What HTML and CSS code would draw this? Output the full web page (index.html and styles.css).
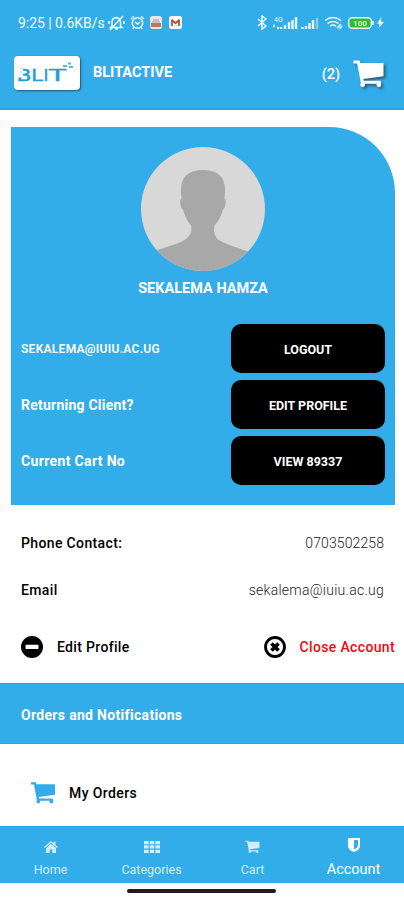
FILE: index.html
```html
<!DOCTYPE html>
<html lang="en">
<head>
<meta charset="utf-8">
<meta name="viewport" content="width=device-width, initial-scale=1">
<title>BLITACTIVE</title>
<link rel="stylesheet" href="styles.css">
</head>
<body>
<svg class="defs" aria-hidden="true">
  <symbol id="cart" viewBox="0 0 24 24">
    <path d="M0 1.200h4.700l.9 2H24V13.800L7.800 16l.4 1.400h13.600v2.400H6L2.900 3.500H0z"/>
    <circle cx="7.300" cy="20.500" r="1.900"/><circle cx="20.300" cy="20.500" r="1.900"/>
  </symbol>
</svg>
<header class="top">
  <div class="status">
    <span class="clock">9:25 | 0.6KB/s</span>
    <svg class="mute" viewBox="0 0 17 16"><path d="M4 11V7q0-4 4-4.500 4 .5 4.500 4.500v4l1.500 1.500H2.500zM7 14h3M2 15 15 1M1 6v3M16 6v3"/></svg>
    <svg class="alarm" viewBox="0 0 15 15"><circle cx="7.500" cy="8" r="5.200"/><path d="M1 4 4 1.200M14 4l-3-2.800M5 7l2.500 2L10 7M4 12l-1 2M11 12l1 2"/></svg>
    <svg class="app" viewBox="0 0 12 13"><rect width="12" height="13" rx="2.500" fill="#e9e5e8"/><path d="M1 7h10v4H1z" fill="#b57965"/><path d="M3 4h6M2 6h8" stroke="#b5b1bb"/></svg>
    <svg class="gmail" viewBox="0 0 13 13"><rect width="13" height="13" rx="2.500" fill="#fff"/><path d="M3 10V4" stroke="#4285f4" stroke-width="2"/><path d="M10 10V4" stroke="#34a853" stroke-width="2"/><path d="m2.500 3.800 4 3.400 4-3.400" fill="none" stroke="#e63b30" stroke-width="2"/></svg>
    <svg class="bluetooth" viewBox="0 0 10 15"><path d="m1 4 8 7-4 3V1l4 3-8 7"/></svg>
    <svg class="signal" viewBox="0 0 26 14"><text x="2" y="5.500">4G</text><path d="M1 10h2M5 12h2M9 13v-2M13 13V9M17 13V6M20.500 13V4M24 13V1"/></svg>
    <svg class="signal two" viewBox="0 0 18 14"><path d="M1.500 13v-2M5 13v-3M8.500 13V7M12 13V4"/><path d="M16 13V2" opacity=".45"/></svg>
    <svg class="wifi" viewBox="0 0 19 14"><path d="M1 4.500q8-6 16 0M3.500 7.500q5.500-4 11 0M6 10.200q3-2.200 6 0M9 12.500v.1M13 12l4-4M15 13l3-3"/></svg>
    <svg class="battery" viewBox="0 0 26 12"><rect x=".7" y=".7" width="22.600" height="10.600" rx="3.500" fill="#35b83b" stroke="#eafbea" stroke-width="1.400"/><path d="M24.800 4v4" stroke="#fff" stroke-width="1.500"/><text x="12" y="9">100</text></svg>
    <svg class="bolt" viewBox="0 0 8 12"><path d="M5 0 0 7h3l-1 5 6-7H4.500z"/></svg>
  </div>
  <div class="brand-row">
    <svg class="logo" viewBox="0 0 66 34" role="img" aria-label="BLIT">
      <defs><clipPath id="b-clip"><path d="M6 8h14v20H3v-6.500h6V17H7v-2h2v-2H6z"/></clipPath></defs>
      <g clip-path="url(#b-clip)"><text x="2.500" y="25" textLength="15" lengthAdjust="spacingAndGlyphs">B</text></g>
      <text x="17" y="25" textLength="12" lengthAdjust="spacingAndGlyphs">L</text>
      <text x="29.500" y="25">I</text>
      <text x="35" y="25" textLength="17" lengthAdjust="spacingAndGlyphs">T</text>
      <path class="pixels" d="M49 9h4v2h-4zM54 6.500h3v2h-3zM55 10h4v2h-4z"/>
    </svg>
    <span class="brand">BLITACTIVE</span>
    <span class="count">(2)</span>
    <svg class="cart-top"><use href="#cart"/></svg>
  </div>
</header>
<main>
  <section class="profile">
    <svg class="avatar" viewBox="0 0 124 124"><defs><clipPath id="disc"><circle cx="62" cy="62" r="62"/></clipPath></defs><g clip-path="url(#disc)"><path d="M0 0h124v124H0z" fill="#d8d8d8"/><path d="M62 23c15 0 23 7 22 23l-.5 6c2 0 1.500 9-1.500 10.500-2 7-4 11-8.500 16-1.500 8 1 13 7 16 8 4 19 7 29 11v20H10v-20c12-5 22-7 31-11 6-3 11-8 9-16-4-5-6-9-8-16-3-2-4-10-1.500-10.500L40 46c-1-16 7-23 22-23z" fill="#a8a8a8"/></g></svg>
    <h1>SEKALEMA HAMZA</h1>
    <div class="line"><span class="mail-caps">SEKALEMA@IUIU.AC.UG</span><button>LOGOUT</button></div>
    <div class="line"><span class="returning">Returning Client?</span><button>EDIT PROFILE</button></div>
    <div class="line"><span class="current">Current Cart No</span><button>VIEW 89337</button></div>
  </section>
  <dl class="contact">
    <div><dt>Phone Contact:</dt><dd class="phone">0703502258</dd></div>
    <div><dt>Email</dt><dd class="email">sekalema@iuiu.ac.ug</dd></div>
  </dl>
  <div class="actions">
    <svg viewBox="0 0 22 22"><circle cx="11" cy="11" r="11"/><rect x="4.500" y="8.800" width="13" height="4.200" rx=".7" fill="#fff"/></svg>
    <span class="edit">Edit Profile</span>
    <svg class="close-icon" viewBox="0 0 22 22"><circle cx="11" cy="11" r="9.500" fill="none" stroke="#000" stroke-width="2.800"/><path d="m7.500 7.500 7 7m0-7-7 7" stroke="#000" stroke-width="3.800"/></svg>
    <span class="close">Close Account</span>
  </div>
  <h2><span>Orders and Notifications</span></h2>
  <div class="orders"><svg><use href="#cart"/></svg><span>My Orders</span></div>
</main>
<nav>
  <a><svg class="home" viewBox="0 0 14 12"><path d="m0 6 7-6 2.500 2.200V.8h2v3.100L14 6l-.8 1L7 1.800.8 7z"/><path d="m2 7 5-4.200L12 7v5H8.300V8.500H5.700V12H2z"/></svg><span>Home</span></a>
  <a><svg class="grid" viewBox="0 0 16 12"><path d="M0 0h4.600v3.300H0zM5.700 0h4.600v3.300H5.700zM11.400 0H16v3.300h-4.600zM0 4.300h4.600v3.300H0zM5.700 4.300h4.600v3.300H5.700zM11.400 4.300H16v3.300h-4.600zM0 8.700h4.600V12H0zM5.700 8.700h4.600V12H5.700zM11.400 8.700H16V12h-4.600z"/></svg><span>Categories</span></a>
  <a><svg class="small-cart"><use href="#cart"/></svg><span>Cart</span></a>
  <a class="active"><svg class="shield" viewBox="0 0 12 14"><path fill-rule="evenodd" d="M0 0h12v7c0 4-3 6-6 7-3-1-6-3-6-7zm6 2v9.500c2.500-1 4-2.500 4-4.500V2z"/></svg><span>Account</span></a>
</nav>
<footer><i></i></footer>
</body>
</html>
```
FILE: styles.css
```css
* { box-sizing: border-box; }
body { margin: 0; width: 404px; height: 900px; overflow: hidden; background: #fff; color: #000; font: 14px Roboto, sans-serif; display: flex; flex-direction: column; }
svg { display: block; flex: none; }
span, h1, dt, dd, button { white-space: nowrap; }
.defs { position: absolute; width: 0; height: 0; }
.top { height: 110px; flex: none; background: #33adea; border-bottom: 2px solid #20a7e8; color: #fff; }
.status { height: 44px; padding: 1px 18px 0; display: flex; align-items: center; }
.status svg { fill: none; stroke: #eaf9ff; stroke-width: 1.5; }
.clock { width: 87px; font-size: 14px; color: #f1fbff; letter-spacing: -.05px; }
.mute { width: 17px; height: 16px; margin-left: 3px; }
.alarm { width: 15px; height: 15px; margin-left: 5px; }
.status .app { width: 12px; height: 13px; margin-left: 5px; stroke: none; }
.status .gmail { width: 13px; height: 13px; margin-left: 7px; stroke: none; }
.bluetooth { width: 10px; height: 15px; margin-left: 75px; }
.signal { width: 26px; height: 14px; margin-left: 5px; }
.status .signal { stroke-width: 2.4; }
.signal text { fill: #eaf9ff; stroke: none; font-size: 7px; }
.two { width: 18px; margin-left: 3px; }
.wifi { width: 19px; height: 14px; margin-left: 5px; }
.battery { width: 26px; height: 12px; margin-left: 5px; }
.battery text { font-size: 8px; font-weight: 700; fill: #d7f4bf; stroke: none; text-anchor: middle; }
.status .bolt { width: 7px; height: 11px; margin-left: 3px; fill: #fff; stroke: none; }
.brand-row { height: 60px; padding: 0 20px 0 14px; display: flex; align-items: center; }
.logo { width: 66px; height: 34px; margin-top: -2px; background: #fff; border-radius: 4px; box-shadow: 1px 1px 2px #245575; font: 16.5px "DejaVu Sans", sans-serif; fill: #269cd2; stroke: #269cd2; stroke-width: .4; }
.pixels { stroke: none; opacity: .75; }
.brand { margin: -4px 0 0 13px; font-size: 14.5px; font-weight: 700; }
.count { margin: 0 13px 0 auto; font-size: 14.5px; font-weight: 500; }
.cart-top { width: 31px; height: 30px; fill: #fff; filter: drop-shadow(2px 2px 1.5px #265979); }
.profile { width: 384px; height: 378px; margin: 17px 0 0 11px; padding: 20px 10px 0; background: #33adea; border-radius: 0 66px 0 0; color: #fff; }
.avatar { width: 124px; height: 124px; margin: 0 auto; }
h1 { height: 34px; margin: 0 0 19px; padding-top: 1px; font-size: 14.5px; line-height: 34px; text-align: center; }
.line { height: 49px; margin-bottom: 7px; display: flex; justify-content: space-between; align-items: center; font-weight: 700; }
.mail-caps { padding-top: 1px; font-size: 12px; font-weight: 600; letter-spacing: .28px; }
.returning { letter-spacing: .23px; }
.current { letter-spacing: .35px; }
button { width: 154px; height: 49px; padding: 1px 0 0; border: 0; border-radius: 10px; background: #000; color: #fff; font: 700 12.5px Roboto, sans-serif; }
.contact { margin: 14px 20px 0 21px; }
.contact div { height: 47px; display: flex; align-items: center; justify-content: space-between; }
dt { font-weight: 500; letter-spacing: .36px; }
dd { margin: 0; font-weight: 300; color: #222; }
.phone { letter-spacing: .1px; }
.email { letter-spacing: .26px; }
.actions { height: 70px; padding: 0 9px 2px 21px; display: flex; align-items: center; font-weight: 500; }
.actions > svg { width: 22px; height: 22px; }
.edit { margin-left: 14px; letter-spacing: .33px; }
.close-icon { margin-left: auto; }
.close { margin-left: 14px; color: #f00810; letter-spacing: .35px; }
h2 { height: 61px; margin: 0; padding: 1px 21px 0; background: #33adea; border: solid #24a7e7; border-width: 1px 0; color: #fff; font-size: 14px; line-height: 61px; letter-spacing: .32px; }
.orders { height: 82px; padding: 15px 31px 0; display: flex; align-items: center; font-weight: 500; letter-spacing: .4px; }
.orders svg { width: 24px; height: 24px; fill: #33adea; margin-right: 14px; }
nav { height: 57px; flex: none; background: #33adea; border-top: 1px solid #21a6e6; display: grid; grid-template-columns: repeat(4, 1fr); color: #d2edfb; }
nav a { display: flex; flex-direction: column; align-items: center; justify-content: flex-end; padding-bottom: 5px; font-size: 12.5px; line-height: 16px; }
nav svg { fill: currentColor; margin-bottom: 9px; }
.home { width: 14px; height: 12px; }
.grid { width: 16px; height: 12px; }
.small-cart { width: 15px; height: 14px; margin-bottom: 8px; }
.shield { width: 12px; height: 14px; margin-bottom: 10px; }
.active { color: #fff; font-size: 14.5px; }
footer { height: 16px; padding-top: 6px; }
footer i { display: block; width: 149px; height: 4px; margin-left: 127px; border-radius: 2px; background: #211b1d; }
```
